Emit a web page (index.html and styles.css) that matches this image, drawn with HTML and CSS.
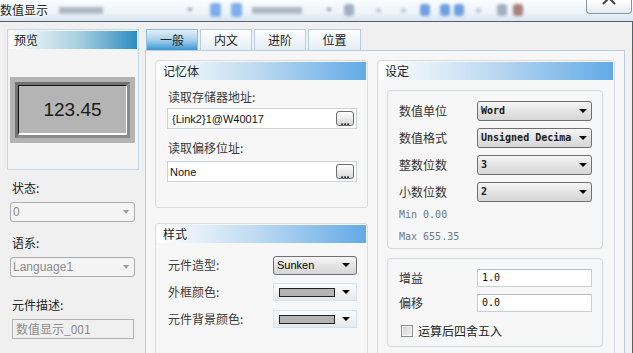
FILE: index.html
```html
<!DOCTYPE html>
<html lang="zh-CN">
  <head>
    <meta charset="UTF-8" />
    <title>数值显示</title>
    <link rel="stylesheet" href="styles.css">
  </head>
  <body>
    <!-- Barra de título (fondo difuminado tipo Aero) -->
    <div class="titlebar">
      <span class="title">数值显示</span>
      <div class="ghosts">
        <span class="ghost txt" style="margin-left:11px;width:44px"></span>
        <span class="ghost arrow" style="margin-left:84px"></span>
        <span class="ghost blue" style="margin-left:17px"></span>
        <span class="ghost blue" style="margin-left:10px"></span>
        <span class="ghost txt" style="margin-left:10px;width:50px"></span>
        <span class="ghost arrow" style="margin-left:24px"></span>
        <span class="ghost icon" style="margin-left:12px"></span>
        <span class="ghost dot" style="margin-left:22px"></span>
        <span class="ghost dot" style="margin-left:20px"></span>
        <span class="ghost icon blue" style="margin-left:14px"></span>
        <span class="ghost icon blue" style="margin-left:10px"></span>
        <span class="ghost icon blue" style="margin-left:4px"></span>
        <span class="ghost dot" style="margin-left:12px"></span>
        <span class="ghost icon" style="margin-left:16px"></span>
        <span class="ghost icon red" style="margin-left:6px"></span>
      </div>
      <div class="close-btn">
        <svg width="16" height="12" viewBox="0 0 16 12">
          <path d="M2 -8 L14 4 M14 -8 L2 4" stroke="#fff" stroke-width="4.5" />
          <path d="M2 -8 L14 4 M14 -8 L2 4" stroke="#4a4a4a" stroke-width="2.2" />
        </svg>
      </div>
    </div>

    <div class="window">
      <!-- Columna izquierda -->
      <aside class="sidebar">
        <div class="preview-box">
          <div class="bar-head preview-head">预览</div>
          <div class="display">
            <div class="display-frame">
              <div class="display-face">123.45</div>
            </div>
          </div>
        </div>

        <div class="side-label first">状态:</div>
        <div class="dd-disabled"><span>0</span><i class="tri gray"></i></div>

        <div class="side-label second">语系:</div>
        <div class="dd-disabled"><span>Language1</span><i class="tri gray"></i></div>

        <div class="side-label third">元件描述:</div>
        <div class="desc-input">数值显示_001</div>
      </aside>

      <!-- Pestañas -->
      <section class="tabs">
        <div class="tab-row">
          <div class="tab active">一般</div>
          <div class="tab">内文</div>
          <div class="tab">进阶</div>
          <div class="tab wide">位置</div>
        </div>

        <div class="tab-panel">
          <div class="col col-left">
            <div class="group memory">
              <div class="bar-head">记忆体</div>
              <div class="group-body">
                <div class="field-label l1">读取存储器地址:</div>
                <div class="addr-input i1">
                  <span>{Link2}1@W40017</span>
                  <button class="dots">...</button>
                </div>
                <div class="field-label l2">读取偏移位址:</div>
                <div class="addr-input i2">
                  <span>None</span>
                  <button class="dots">...</button>
                </div>
              </div>
            </div>

            <div class="group style">
              <div class="bar-head">样式</div>
              <div class="group-body">
                <div class="style-row first">
                  <span class="field-label">元件造型:</span>
                  <div class="select sunken"><span>Sunken</span><i class="tri"></i></div>
                </div>
                <div class="style-row">
                  <span class="field-label">外框颜色:</span>
                  <div class="color-dd"><i class="swatch"></i><i class="tri"></i></div>
                </div>
                <div class="style-row">
                  <span class="field-label">元件背景颜色:</span>
                  <div class="color-dd"><i class="swatch"></i><i class="tri"></i></div>
                </div>
              </div>
            </div>
          </div>

          <div class="col col-right">
            <div class="group settings">
              <div class="bar-head">设定</div>
              <div class="inner-box format-box">
                <div class="set-row">
                  <span class="set-label">数值单位</span>
                  <div class="select mono"><span>Word</span><i class="tri"></i></div>
                </div>
                <div class="set-row">
                  <span class="set-label">数值格式</span>
                  <div class="select mono"><span>Unsigned Decima</span><i class="tri"></i></div>
                </div>
                <div class="set-row">
                  <span class="set-label">整数位数</span>
                  <div class="select mono"><span>3</span><i class="tri"></i></div>
                </div>
                <div class="set-row">
                  <span class="set-label">小数位数</span>
                  <div class="select mono"><span>2</span><i class="tri"></i></div>
                </div>
                <div class="range min">Min 0.00</div>
                <div class="range max">Max 655.35</div>
              </div>

              <div class="inner-box gain-box">
                <div class="set-row short">
                  <span class="set-label">增益</span>
                  <div class="num-input">1.0</div>
                </div>
                <div class="set-row short">
                  <span class="set-label">偏移</span>
                  <div class="num-input">0.0</div>
                </div>
                <div class="check-row">
                  <i class="checkbox"></i>
                  <span>运算后四舍五入</span>
                </div>
              </div>
            </div>
          </div>
        </div>
      </section>
    </div>
  </body>
</html>
```

FILE: styles.css
```css
/* Estilos generales */
* {
  box-sizing: border-box;
}

body {
  margin: 0;
  width: 633px;
  height: 353px;
  overflow: hidden;
  background: #f0f0f0;
  color: #222;
  font-family: "Noto Sans CJK SC", "Liberation Sans", sans-serif;
  font-size: 12px;
  line-height: 20px;
}

/* Barra de título */
.titlebar {
  height: 22px;
  display: flex;
  align-items: flex-start;
  background: linear-gradient(#fbfdff, #eef4f9 60%, #d8e5f0);
  border-bottom: 1px solid #56606c;
  overflow: hidden;
}

.title {
  font-size: 12px;
  line-height: 19px;
  text-shadow: 0 0 4px #fff, 0 0 8px #fff;
}

.ghosts {
  flex: 1;
  height: 20px;
  display: flex;
  align-items: center;
  filter: blur(1.8px);
}

.ghost {
  display: inline-block;
  flex: none;
}

.ghost.txt {
  height: 7px;
  background: #aeb8c3;
}

.ghost.arrow {
  border-left: 3px solid transparent;
  border-right: 3px solid transparent;
  border-top: 4px solid #8f99a4;
}

.ghost.blue {
  width: 11px;
  height: 14px;
  border-radius: 3px;
  background: #7eaeee;
}

.ghost.icon {
  width: 10px;
  height: 12px;
  border-radius: 3px;
  background: #a2b0c2;
}

.ghost.icon.blue {
  background: #6f9fe0;
}

.ghost.icon.red {
  background: #a8807c;
}

.ghost.dot {
  width: 5px;
  height: 5px;
  border-radius: 50%;
  background: #bccada;
}

.close-btn {
  width: 46px;
  height: 14px;
  margin-right: 1px;
  border: 1px solid #8a949f;
  border-top: none;
  border-radius: 0 0 4px 4px;
  background: linear-gradient(#ffffff, #e6ecf2);
  display: flex;
  justify-content: center;
}

/* Ventana */
.window {
  height: 331px;
  display: flex;
  padding-top: 7px;
  border-right: 1px solid #56606c;
}

/* Columna izquierda */
.sidebar {
  width: 145px;
  flex: none;
  padding-left: 7px;
  padding-right: 6px;
}

.preview-box {
  height: 141px;
  border: 1px solid #c5d9eb;
  background: #f4f4f4;
}

.bar-head {
  height: 18px;
  margin: 1px 1px 0 1px;
  padding-left: 6px;
  line-height: 18px;
  background: linear-gradient(to right, #ffffff 0%, #c2dcf2 45%, #62aae6 100%);
}

.preview-head {
  padding-left: 5px;
  background: linear-gradient(to right, #ffffff 0%, #a6cfe0 55%, #2c8cc2 100%);
}

.display {
  width: 125px;
  height: 66px;
  margin: 28px 0 0 2px;
  padding: 5px;
  background: #b4b4b4;
}

.display-frame {
  height: 100%;
  border: 3px solid #727272;
  border-right-color: #8a8a8a;
  border-bottom-color: #8a8a8a;
}

.display-face {
  height: 100%;
  border-top: 1px solid #111;
  border-left: 1px solid #111;
  border-right: 1px solid #fff;
  border-bottom: 2px solid #fff;
  background: #b4b4b4;
  display: flex;
  align-items: center;
  justify-content: center;
  font-family: "Liberation Sans", sans-serif;
  font-size: 19px;
  color: #1a1a1a;
}

.side-label {
  padding-left: 5px;
  color: #222;
}

.side-label.first {
  margin-top: 8px;
}

.side-label.second {
  margin-top: 11px;
}

.side-label.third {
  margin-top: 18px;
}

.dd-disabled {
  width: 125px;
  height: 20px;
  margin: 4px 0 0 3px;
  padding: 0 5px 0 2px;
  border: 1px solid #acacac;
  border-radius: 3px;
  background: #f4f4f4;
  display: flex;
  align-items: center;
  justify-content: space-between;
  font-family: "Liberation Sans", sans-serif;
  font-size: 12px;
  color: #8c8c8c;
}

.desc-input {
  width: 122px;
  height: 20px;
  margin: 4px 0 0 5px;
  padding-left: 3px;
  border: 1px solid #b4b4b4;
  background: #f0f0f0;
  color: #8c8c8c;
  line-height: 18px;
}

/* Triángulos de los desplegables */
.tri {
  width: 0;
  height: 0;
  border-left: 4px solid transparent;
  border-right: 4px solid transparent;
  border-top: 4px solid #000;
  flex: none;
}

.tri.gray {
  border-left-width: 3.5px;
  border-right-width: 3.5px;
  border-top-color: #9c9c9c;
}

/* Pestañas */
.tabs {
  width: 480px;
  flex: none;
  display: flex;
  flex-direction: column;
}

.tab-row {
  height: 21px;
  display: flex;
  gap: 2px;
  margin-left: 1px;
}

.tab {
  width: 52px;
  border: 1px solid #b6cde2;
  border-bottom: none;
  background: linear-gradient(#ffffff, #e4edf6);
  text-align: center;
  line-height: 20px;
}

.tab.wide {
  width: 53px;
}

.tab.active {
  background: linear-gradient(#e2eff9 0%, #a7d0ec 50%, #3795d2 100%);
  border-color: #8fbde0;
}

.tab-panel {
  flex: 1;
  display: flex;
  gap: 9px;
  padding: 9px 9px 0 9px;
  border: 1px solid #b8cfe3;
  border-bottom: none;
  background: #f6f6f6;
  overflow: hidden;
}

.col-left {
  width: 213px;
  flex: none;
}

.col-right {
  width: 238px;
  flex: none;
}

/* Grupos */
.group {
  border: 1px solid #d9dde2;
  border-radius: 3px;
  background: #f7f7f7;
}

.group.memory {
  height: 148px;
}

.group.style {
  height: 140px;
  margin-top: 15px;
}

.group.settings {
  height: 300px;
}

.group-body {
  padding: 0 10px 0 11px;
}

.field-label {
  padding-left: 1px;
  color: #3c3a38;
}

.field-label.l1 {
  margin-top: 7px;
}

.field-label.l2 {
  margin-top: 9px;
}

.addr-input {
  height: 21px;
  display: flex;
  align-items: center;
  justify-content: space-between;
  padding: 0 2px 0 4px;
  border: 1px solid #ccd3da;
  background: #fff;
  font-family: "Liberation Sans", sans-serif;
  font-size: 11px;
  color: #111;
}

.addr-input.i1 {
  margin-top: 1px;
}

.addr-input.i2 {
  margin-top: 3px;
  padding-left: 2px;
}

.dots {
  width: 18px;
  height: 15px;
  padding: 0;
  border: 1px solid #6e6e6e;
  border-radius: 3px;
  background: linear-gradient(#fdfdfd, #d9d9d9);
  font-family: "Liberation Sans", sans-serif;
  font-size: 11px;
  font-weight: bold;
  line-height: 18px;
  color: #111;
}

/* Filas de estilo */
.style-row {
  height: 20px;
  margin-top: 7px;
  display: flex;
  align-items: center;
  justify-content: space-between;
}

.style-row.first {
  margin-top: 12px;
}

.select {
  height: 19px;
  display: flex;
  align-items: center;
  justify-content: space-between;
  border: 1px solid #707070;
  border-radius: 3px;
  background: linear-gradient(#f6f6f6, #e4e4e4 50%, #d6d6d6);
  color: #000;
}

.select.sunken {
  width: 84px;
  padding: 0 6px 0 3px;
  font-family: "Liberation Sans", sans-serif;
  font-size: 11px;
}

.select.mono {
  width: 115px;
  height: 20px;
  padding: 0 4px 0 3px;
  font-family: "DejaVu Sans Mono", monospace;
  font-size: 10px;
  font-weight: bold;
  color: #1a1a1a;
}

.color-dd {
  width: 84px;
  height: 18px;
  padding: 0 6px 0 5px;
  display: flex;
  align-items: center;
  justify-content: space-between;
  border: 1px solid #cfe3f2;
  background: linear-gradient(#fdfdfd, #e8e8e8);
}

.swatch {
  width: 56px;
  height: 9px;
  border: 1px solid #222;
  background: #b4b4b4;
}

/* Grupo de configuración */
.inner-box {
  width: 216px;
  margin-left: 9px;
  border: 1px solid #d4d9e0;
  border-radius: 4px;
  padding: 10px 10px 0 11px;
}

.format-box {
  height: 159px;
  margin-top: 10px;
}

.gain-box {
  height: 89px;
  margin-top: 9px;
}

.set-row {
  height: 20px;
  display: flex;
  align-items: center;
  justify-content: space-between;
}

.set-row + .set-row {
  margin-top: 7px;
}

.set-row.short {
  height: 18px;
}

.set-label {
  color: #333;
}

.range {
  font-family: "DejaVu Sans Mono", monospace;
  font-size: 10px;
  color: #6b7a8c;
}

.range.min {
  margin-top: 3px;
}

.range.max {
  margin-top: 2px;
}

.num-input {
  width: 115px;
  height: 18px;
  padding-left: 4px;
  border: 1px solid #c9cfd6;
  border-top-color: #b4bcc5;
  background: #fff;
  font-family: "DejaVu Sans Mono", monospace;
  font-size: 10px;
  line-height: 16px;
  color: #111;
}

.check-row {
  height: 18px;
  margin-top: 10px;
  display: flex;
  align-items: center;
  gap: 5px;
  padding-left: 2px;
}

.checkbox {
  width: 12px;
  height: 12px;
  border: 1px solid #8e8f8f;
  box-shadow: inset 0 0 0 1px #f4f4f4;
  background: linear-gradient(135deg, #d2d2d2, #f4f4f4);
}
```
